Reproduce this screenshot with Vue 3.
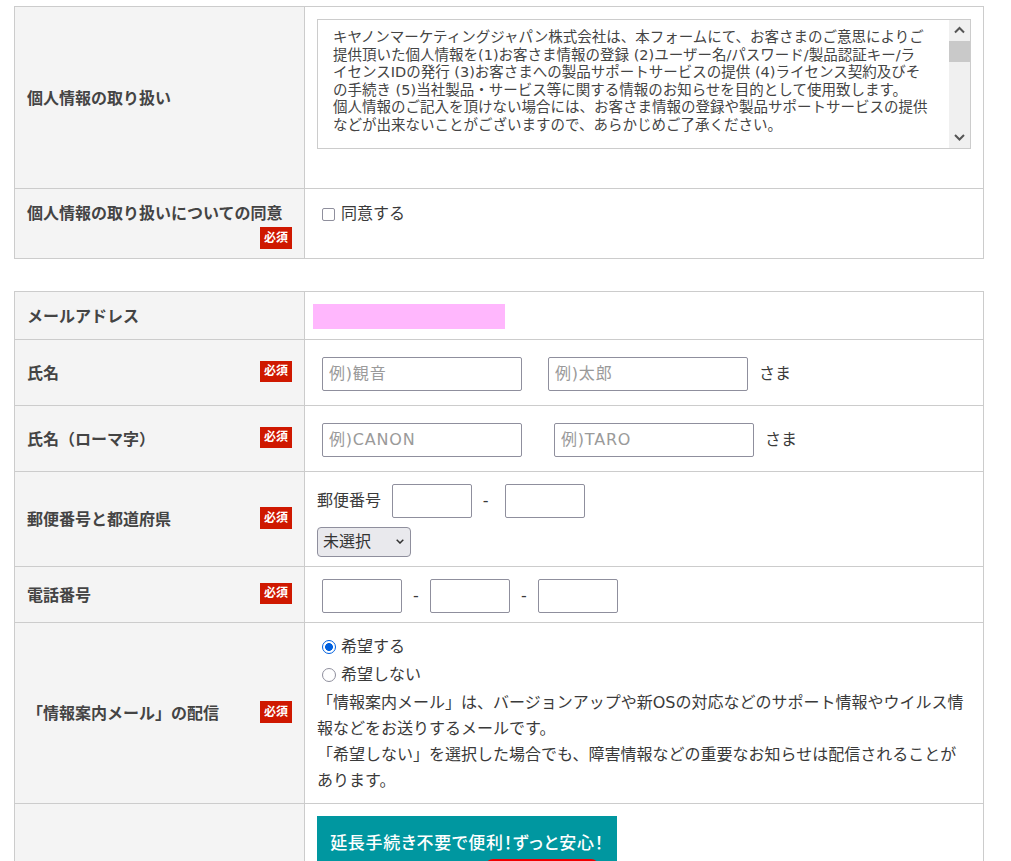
<script setup>
const policy = [
  'キヤノンマーケティングジャパン株式会社は、本フォームにて、お客さまのご意思によりご',
  '提供頂いた個人情報を(1)お客さま情報の登録 (2)ユーザー名/パスワード/製品認証キー/ラ',
  'イセンスIDの発行 (3)お客さまへの製品サポートサービスの提供 (4)ライセンス契約及びそ',
  'の手続き (5)当社製品・サービス等に関する情報のお知らせを目的として使用致します。',
  '個人情報のご記入を頂けない場合には、お客さま情報の登録や製品サポートサービスの提供',
  'などが出来ないことがございますので、あらかじめご了承ください。'
]
</script>

<template>
  <div class="page">
    <table class="form first">
      <tbody>
        <tr class="r-policy">
          <th><div class="head"><span>個人情報の取り扱い</span></div></th>
          <td class="top">
            <div class="policy">
              <div class="policy-text">
                <div v-for="line in policy" :key="line" class="policy-line">{{ line }}</div>
              </div>
              <div class="scrollbar">
                <svg class="arrow" width="21" height="21" viewBox="0 0 21 21"><path d="M6 12.5 L10.5 8 L15 12.5" fill="none" stroke="#555" stroke-width="2"/></svg>
                <div class="thumb"></div>
                <div class="track"></div>
                <svg class="arrow" width="21" height="21" viewBox="0 0 21 21"><path d="M6 8 L10.5 12.5 L15 8" fill="none" stroke="#555" stroke-width="2"/></svg>
              </div>
            </div>
          </td>
        </tr>
        <tr class="r-agree">
          <th>
            <div class="head stack">
              <span>個人情報の取り扱いについての同意</span>
              <span class="req tall">必須</span>
            </div>
          </th>
          <td class="agree-cell">
            <label class="check"><input type="checkbox" class="box" />同意する</label>
          </td>
        </tr>
      </tbody>
    </table>

    <table class="form second">
      <tbody>
        <tr class="r-mail">
          <th><div class="head"><span>メールアドレス</span></div></th>
          <td><div class="mail-mask"></div></td>
        </tr>
        <tr class="r-name">
          <th><div class="head"><span>氏名</span><span class="req">必須</span></div></th>
          <td>
            <div class="fields">
              <input class="text w200" placeholder="例)観音" />
              <input class="text w200 ml26" placeholder="例)太郎" />
              <span class="suffix">さま</span>
            </div>
          </td>
        </tr>
        <tr class="r-name">
          <th><div class="head"><span>氏名（ローマ字）</span><span class="req">必須</span></div></th>
          <td>
            <div class="fields">
              <input class="text w200" placeholder="例)CANON" />
              <input class="text w200 ml32" placeholder="例)TARO" />
              <span class="suffix">さま</span>
            </div>
          </td>
        </tr>
        <tr class="r-zip">
          <th><div class="head"><span>郵便番号と都道府県</span><span class="req tall">必須</span></div></th>
          <td>
            <div class="zip">
              <span>郵便番号</span>
              <input class="text w80 ml11" />
              <span class="dash zip-dash">-</span>
              <input class="text w80" />
            </div>
            <div class="select-wrap">
              <select class="pref"><option>未選択</option></select>
              <svg class="chev" width="8" height="5" viewBox="0 0 8 5"><path d="M0.7 0.7 L4 4 L7.3 0.7" fill="none" stroke="#333" stroke-width="1.5"/></svg>
            </div>
          </td>
        </tr>
        <tr class="r-tel">
          <th><div class="head"><span>電話番号</span><span class="req">必須</span></div></th>
          <td>
            <div class="fields">
              <input class="text w80" />
              <span class="dash tel-dash">-</span>
              <input class="text w80" />
              <span class="dash tel-dash">-</span>
              <input class="text w80" />
            </div>
          </td>
        </tr>
        <tr class="r-news">
          <th><div class="head"><span>「情報案内メール」の配信</span><span class="req tall">必須</span></div></th>
          <td>
            <label class="radio-line"><input type="radio" name="news" class="radio" checked />希望する</label>
            <label class="radio-line"><input type="radio" name="news" class="radio" />希望しない</label>
            <p class="note">「情報案内メール」は、バージョンアップや新OSの対応などのサポート情報やウイルス情報などをお送りするメールです。<br />「希望しない」を選択した場合でも、障害情報などの重要なお知らせは配信されることがあります。</p>
          </td>
        </tr>
        <tr class="r-promo">
          <th></th>
          <td class="top">
            <div class="promo">
              <div class="promo-title">延長手続き不要で便利！ずっと安心！</div>
              <div class="promo-tag"></div>
            </div>
          </td>
        </tr>
      </tbody>
    </table>
  </div>
</template>

<style scoped>
.page {
  box-sizing: border-box;
  height: 861px;
  overflow: hidden;
  padding: 6px 0 0 14px;
  background: #fff;
  color: #3a3a3a;
  font-family: "DejaVu Sans", "Noto Sans CJK JP", sans-serif;
  font-size: 16px;
  line-height: 26px;
}
.form {
  width: 970px;
  border-collapse: collapse;
  table-layout: fixed;
}
.second { margin-top: 32px; }
th, td {
  border: 1px solid #ccc;
  padding: 0 12px;
  vertical-align: middle;
  text-align: left;
  box-sizing: border-box;
}
th {
  width: 290px;
  background: #f4f4f4;
  font-weight: 700;
  color: #444;
}
td.top { vertical-align: top; padding-top: 12px; }
.head {
  display: flex;
  align-items: center;
  justify-content: space-between;
}
.head > span:first-child { padding-top: 2px; }
.head.stack {
  flex-direction: column;
  align-items: stretch;
  gap: 0;
}
.head.stack > .req { align-self: flex-end; margin-bottom: 0; }
.req {
  width: 32px;
  height: 21px;
  margin-bottom: 2px;
  background: #cf1800;
  color: #fff;
  font-size: 12px;
  line-height: 21px;
  font-weight: 700;
  text-align: center;
  flex: none;
}
.req.tall { height: 22px; line-height: 22px; }
.r-policy { height: 182px; }
.r-agree { height: 70px; }
.r-mail { height: 48px; }
.r-name { height: 66px; }
.r-zip { height: 95px; }
.r-tel { height: 56px; }
.r-news { height: 181px; }
.r-promo { height: 80px; }

.policy {
  display: flex;
  height: 130px;
  box-sizing: border-box;
  border: 1px solid #ccc;
}
.policy-text {
  flex: 1;
  padding: 9px 0 0 15px;
  font-size: 14.5px;
  line-height: 17.6px;
  color: #444;
  white-space: nowrap;
  overflow: hidden;
}
.scrollbar {
  display: flex;
  flex-direction: column;
  width: 21px;
  background: #f0f0f0;
  flex: none;
}
.arrow { display: block; flex: none; }
.thumb { height: 21px; background: #c9c9c9; flex: none; }
.track { flex: 1; }

.agree-cell { vertical-align: top; padding-top: 12px; }
.check, .radio-line {
  display: flex;
  align-items: center;
  padding-left: 5px;
}
.box {
  appearance: none;
  width: 13px;
  height: 13px;
  margin: 0 6px 0 0;
  border: 1px solid #8f8f9d;
  border-radius: 2px;
  background: #fff;
  box-sizing: border-box;
}
.radio {
  appearance: none;
  width: 14px;
  height: 14px;
  margin: 0 5px 0 0;
  border: 1px solid #8f8f9d;
  border-radius: 50%;
  background: #fff;
  box-sizing: border-box;
}
.radio:checked {
  border: 1.5px solid #0060df;
  background: radial-gradient(circle, #0060df 0 3.6px, #fff 4.2px);
}
.radio-line { height: 28px; }
.note {
  margin: 0;
  padding-top: 1px;
}
.mail-mask {
  width: 192px;
  height: 25px;
  margin: 1px 0 0 -4px;
  background: #ffb7fd;
}
.fields {
  display: flex;
  align-items: center;
  padding: 2px 0 0 5px;
}
.text {
  appearance: none;
  box-sizing: border-box;
  height: 34px;
  padding: 0 6px;
  border: 1px solid #8f8f9d;
  border-radius: 2px;
  background: #fff;
  color: #333;
  font: inherit;
  outline: none;
}
.text::placeholder { color: #9a9a9a; opacity: 1; letter-spacing: 0.8px; }
.w200 { width: 200px; }
.w80 { width: 80px; }
.ml26 { margin-left: 26px; }
.ml32 { margin-left: 32px; }
.ml11 { margin-left: 11px; }
.suffix { margin-left: 11px; }
.zip {
  display: flex;
  align-items: center;
  padding-top: 2px;
}
.dash {
  text-align: center;
  flex: none;
}
.zip-dash { width: 33px; padding-right: 6px; box-sizing: border-box; }
.tel-dash { width: 28px; }
.select-wrap {
  position: relative;
  width: 94px;
  margin-top: 9px;
}
.pref {
  appearance: none;
  display: block;
  box-sizing: border-box;
  width: 94px;
  height: 30px;
  padding: 0 0 0 5px;
  border: 1px solid #8f8f9d;
  border-radius: 4px;
  background: #e9e9ed;
  color: #333;
  font: inherit;
}
.chev {
  position: absolute;
  right: 7px;
  top: 12px;
  pointer-events: none;
}
.promo {
  width: 300px;
  height: 80px;
  background: #0097a0;
  position: relative;
}
.promo-title {
  padding-top: 14px;
  color: #fff;
  font-size: 17px;
  font-weight: 500;
  font-feature-settings: "palt";
  letter-spacing: 0.7px;
  text-align: center;
  line-height: 26px;
}
.promo-tag {
  position: absolute;
  left: 168px;
  top: 43px;
  width: 114px;
  height: 24px;
  border-radius: 8px;
  background: #f00000;
}
</style>

<style>
html, body { margin: 0; overflow: hidden; background: #fff; }
</style>
